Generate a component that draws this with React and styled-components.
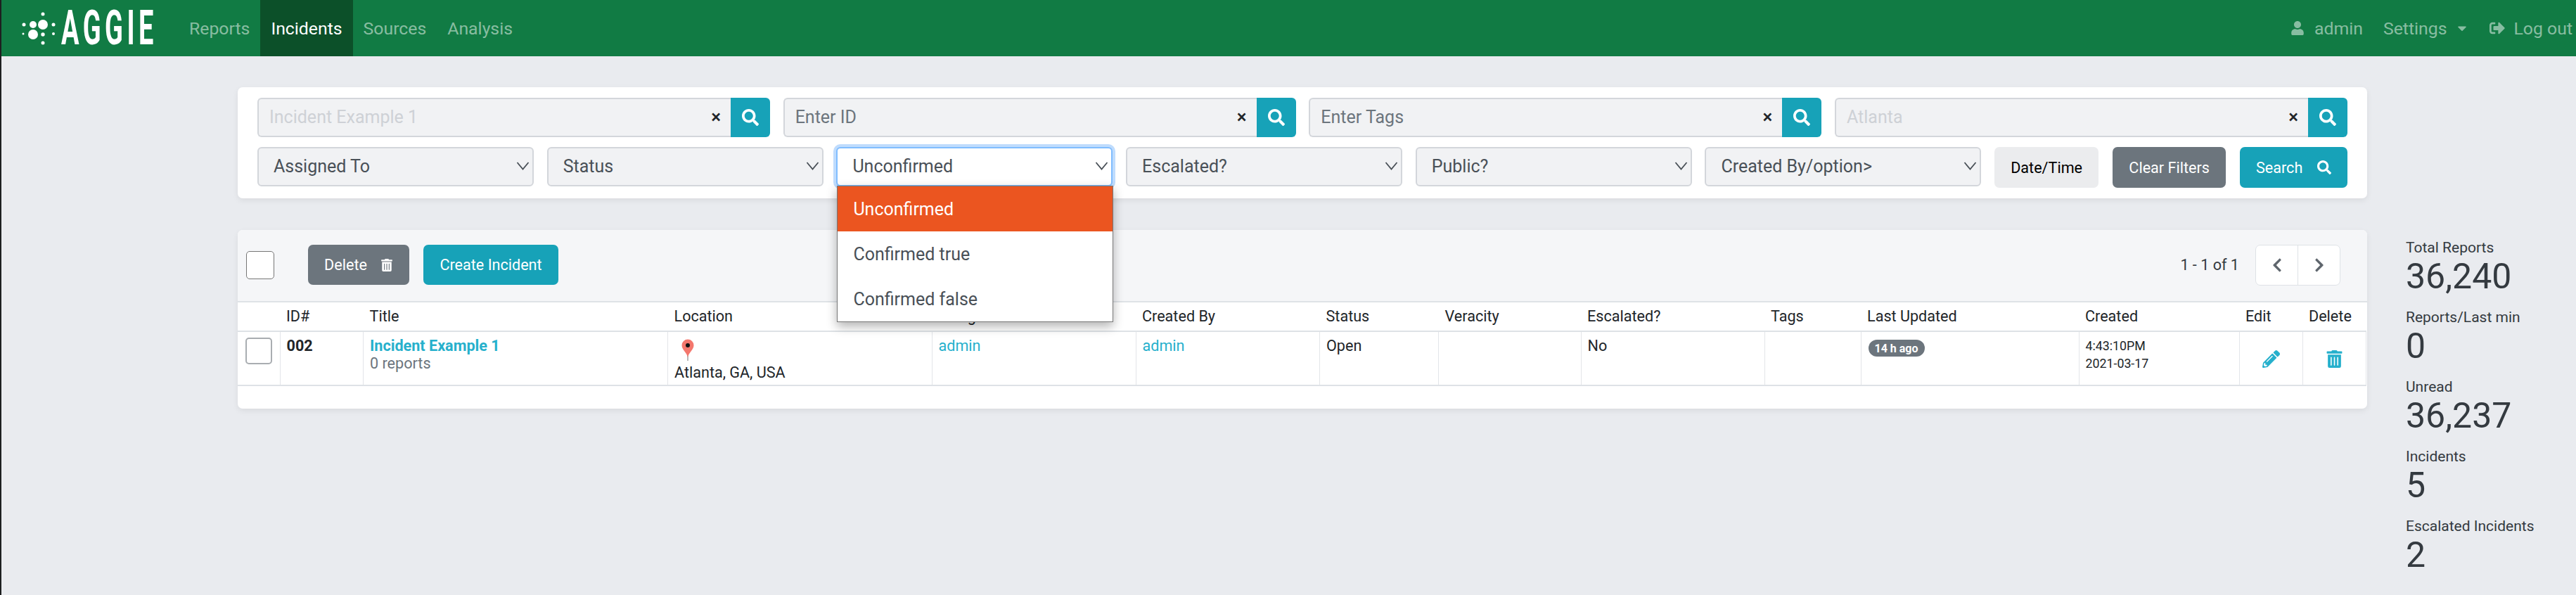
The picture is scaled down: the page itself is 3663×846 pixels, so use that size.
import React from 'react';
import styled, { createGlobalStyle } from 'styled-components';
import { FaSearch, FaTrashAlt, FaPencilAlt, FaUser, FaSignOutAlt, FaCaretDown, FaChevronLeft, FaChevronRight } from 'react-icons/fa';

const GlobalStyle = createGlobalStyle`
    html, body {
        margin: 0;
        height: 100%;
        background: #e9ebef;
    }
    body {
        font-family: Roboto, "Liberation Sans", sans-serif;
        color: #212529;
    }
    * {
        box-sizing: border-box;
    }
`

const Page = styled.div`
    min-height: 100vh;
    border-left: 2px solid #1d1f20;
    overflow: hidden;
`

const Nav = styled.nav`
    height: 80px;
    background: #117b44;
    display: flex;
    align-items: stretch;
    font-size: 24.8px;
`
const Logo = styled.svg`
    width: 232px;
    height: 80px;
    margin-right: 20px;
    flex: none;
`
const NavLink = styled.a`
    display: flex;
    align-items: center;
    padding: 0 15px;
    color: ${props => props.active ? '#fff' : 'rgba(255,255,255,0.5)'};
    background: ${props => props.active ? '#0c5029' : 'transparent'};
`
const NavRight = styled.div`
    margin-left: auto;
    display: flex;
    align-items: center;
    gap: 29px;
    padding-right: 5px;
    color: rgba(255,255,255,0.5);
`
const NavItem = styled.span`
    display: flex;
    align-items: center;
    gap: ${props => props.gap || 14}px;
`

const Main = styled.div`
    display: flex;
    padding: 44px 0 0 336px;
    gap: 55px;
`
const Content = styled.div`
    width: 3028px;
    flex: none;
    display: flex;
    flex-direction: column;
    gap: 45px;
`
const Card = styled.section`
    background: #fff;
    border-radius: 7px;
    box-shadow: 0 3px 8px rgba(0,0,0,0.07);
`

const Filters = styled(Card)`
    height: 158px;
    padding: 15px 28px 0;
    display: flex;
    flex-direction: column;
    gap: 14px;
`
const SearchRow = styled.div`
    display: grid;
    grid-template-columns: repeat(4, 1fr);
    gap: 18.67px;
`
const SearchGroup = styled.div`
    display: flex;
    height: 56px;
`
const SearchInput = styled.div`
    flex: 1;
    display: flex;
    align-items: center;
    justify-content: space-between;
    padding: 0 14px 2px 15px;
    background: #f1f2f4;
    border: 2px solid #d3d6db;
    border-right: 0;
    border-radius: 6px 0 0 6px;
    color: ${props => props.light ? '#ced1d6' : '#6c757d'};
    font-size: 25px;
`
const Clear = styled.span`
    color: #212529;
    font-size: 26px;
    font-weight: 500;
`
const SearchButton = styled.button`
    width: 56px;
    border: 0;
    padding: 0;
    background: #17a2b8;
    border-radius: 0 6px 6px 0;
    color: #fff;
    font-size: 24px;
    display: flex;
    align-items: center;
    justify-content: center;
`
const ControlRow = styled.div`
    display: flex;
    align-items: flex-start;
`
const SelectBox = styled.div`
    position: relative;
    width: 393px;
    height: 56px;
    margin-right: 18.7px;
    flex: none;
    display: flex;
    align-items: center;
    justify-content: space-between;
    padding: 0 1px 2px 21px;
    font-size: 25px;
    color: #495057;
    border-radius: 6px;
    background: ${props => props.open ? '#fff' : '#f1f2f4'};
    border: 2px solid ${props => props.open ? '#80bdff' : '#d3d6db'};
    box-shadow: ${props => props.open ? '0 0 0 4px #bfdcfd' : 'none'};
`
const Menu = styled.ul`
    position: absolute;
    z-index: 5;
    left: -1px;
    top: 53px;
    width: 393px;
    margin: 0;
    padding: 0;
    list-style: none;
    background: #fff;
    border: 1px solid #777;
    box-shadow: 0 6px 14px rgba(0,0,0,0.3);
`
const Option = styled.li`
    height: 64px;
    display: flex;
    align-items: center;
    padding-left: 22px;
    background: ${props => props.active ? '#eb5520' : '#fff'};
    color: ${props => props.active ? '#fff' : '#495057'};
`
const Button = styled.button`
    height: ${props => props.tall ? 58 : 57}px;
    border: 0;
    border-radius: 7px;
    font-family: inherit;
    font-size: 21.6px;
    display: flex;
    align-items: center;
    justify-content: center;
    gap: ${props => props.gap || 0}px;
    color: ${props => props.kind === 'light' ? '#000' : '#fff'};
    background: ${props => ({ info: '#17a2b8', grey: '#6c757d', light: '#ebecee' }[props.kind])};
    width: ${props => props.w}px;
    margin-left: ${props => props.ml || 0}px;
    flex: none;
`

const ListCard = styled(Card)`
    height: 254px;
    overflow: hidden;
`
const Toolbar = styled.div`
    height: 103px;
    background: #f5f6f8;
    border-bottom: 2px solid #dee2e6;
    display: flex;
    align-items: center;
    padding: 0 38px 2px 12px;
`
const CheckBox = styled.span`
    display: block;
    width: ${props => props.size}px;
    height: ${props => props.size}px;
    background: #fff;
    border: ${props => props.soft ? '2px solid #a9adb1' : '1px solid #767676'};
    border-radius: 5px;
    flex: none;
`
const Pager = styled.div`
    margin-left: auto;
    display: flex;
    align-items: center;
    gap: 23px;
    font-size: 21.6px;
    color: #343a40;
`
const PagerGroup = styled.div`
    display: flex;
    width: 121px;
    height: 58px;
    background: #fff;
    border: 1px solid #dee2e6;
    border-radius: 7px;
`
const PagerButton = styled.span`
    flex: 1;
    display: flex;
    align-items: center;
    justify-content: center;
    color: #5f666d;
    font-size: 22px;
    & + & {
        border-left: 1px solid #dee2e6;
    }
`

const Table = styled.table`
    width: 3026px;
    table-layout: fixed;
    border-collapse: collapse;
    font-size: 21.6px;
`
const Th = styled.th`
    height: 41px;
    padding: 0 9px 2px;
    font-weight: 400;
    text-align: left;
    white-space: nowrap;
    border-bottom: 2px solid #dee2e6;
`
const Td = styled.td`
    height: 77px;
    padding: 7px 9px 0;
    vertical-align: top;
    line-height: 25px;
    border-left: 1px solid #e3e5e9;
    border-right: 1px solid #e3e5e9;
    border-bottom: 2px solid #dee2e6;
    &:first-child {
        border-left: 0;
        padding: 8px 0 0 11px;
    }
`
const IconCell = styled(Td)`
    text-align: center;
    color: #26b0cc;
    font-size: 25px;
    padding-top: 26px;
`
const Id = styled.b`
    font-weight: 700;
`
const Link = styled.a`
    color: #26b0cc;
    font-weight: ${props => props.bold ? 700 : 400};
`
const Muted = styled.div`
    color: #6c757d;
`
const Pin = styled.svg`
    display: block;
    width: 20px;
    height: 32px;
    margin: 3px 0 3px 9px;
`
const Badge = styled.span`
    display: inline-flex;
    align-items: center;
    height: 24px;
    padding: 0 9px;
    margin: 4px 0 0 1px;
    border-radius: 12px;
    background: #6c757d;
    color: #fff;
    font-size: 16px;
    font-weight: 700;
`
const DateTime = styled.div`
    font-size: 17.8px;
`

const Stats = styled.aside`
    padding-top: 215px;
    display: flex;
    flex-direction: column;
    gap: 17px;
    color: #343a40;
`
const Stat = styled.div`
    display: flex;
    flex-direction: column;
`
const StatLabel = styled.span`
    font-size: 21px;
    line-height: 26px;
`
const StatValue = styled.span`
    font-size: 50px;
    line-height: 56px;
`

function Chevron() {
    return (
        <svg width="24" height="14" viewBox="0 0 24 14">
            <path d="M3.5 2 L11.5 11.5 L19.5 2" fill="none" stroke="#495057" strokeWidth="1.8" />
        </svg>
    )
}

const searches = [
    { text: 'Incident Example 1', light: true },
    { text: 'Enter ID' },
    { text: 'Enter Tags' },
    { text: 'Atlanta', light: true },
]
const selects = ['Assigned To', 'Status', 'Unconfirmed', 'Escalated?', 'Public?', 'Created By/option>']
const columns = [
    ['', 60], ['ID#', 118.5], ['Title', 433], ['Location', 375.5], ['Assigned To', 290], ['Created By', 261.5], ['Status', 169],
    ['Veracity', 202.5], ['Escalated?', 261], ['Tags', 137], ['Last Updated', 310], ['Created', 228], ['Edit', 90], ['Delete', 90],
]
const stats = [
    ['Total Reports', '36,240'],
    ['Reports/Last min', '0'],
    ['Unread', '36,237'],
    ['Incidents', '5'],
    ['Escalated Incidents', '2'],
]

function App() {
    return (
        <Page>
            <GlobalStyle />
            <Nav>
                <Logo viewBox="0 0 232 80">
                    <g fill="#fff">
                        <circle cx="59" cy="20" r="2.5" />
                        <circle cx="32" cy="35" r="2.5" />
                        <circle cx="45" cy="35" r="5" />
                        <circle cx="59" cy="35" r="7" />
                        <circle cx="74" cy="35" r="2.5" />
                        <circle cx="31" cy="48" r="1.5" />
                        <circle cx="45" cy="49" r="7" />
                        <circle cx="59" cy="49" r="2.7" />
                        <circle cx="74" cy="48" r="2" />
                        <circle cx="59" cy="61" r="2.5" />
                        <text transform="translate(85 63) scale(0.55 1)" letterSpacing="10" fontFamily="Roboto, sans-serif" fontWeight="700" fontSize="69">AGGIE</text>
                    </g>
                </Logo>
                <NavLink>Reports</NavLink>
                <NavLink active>Incidents</NavLink>
                <NavLink>Sources</NavLink>
                <NavLink>Analysis</NavLink>
                <NavRight>
                    <NavItem><FaUser size={20} />admin</NavItem>
                    <NavItem gap={11}>Settings<FaCaretDown size={20} /></NavItem>
                    <NavItem gap={13}><FaSignOutAlt size={22} />Log out</NavItem>
                </NavRight>
            </Nav>
            <Main>
                <Content>
                    <Filters>
                        <SearchRow>
                            {searches.map(s => (
                                <SearchGroup key={s.text}>
                                    <SearchInput light={s.light}>{s.text}<Clear>×</Clear></SearchInput>
                                    <SearchButton><FaSearch /></SearchButton>
                                </SearchGroup>
                            ))}
                        </SearchRow>
                        <ControlRow>
                            {selects.map(s => (
                                <SelectBox key={s} open={s === 'Unconfirmed'}>
                                    {s}<Chevron />
                                    {s === 'Unconfirmed' && (
                                        <Menu>
                                            <Option active>Unconfirmed</Option>
                                            <Option>Confirmed true</Option>
                                            <Option>Confirmed false</Option>
                                        </Menu>
                                    )}
                                </SelectBox>
                            ))}
                            <Button kind="light" w={148} tall>Date/Time</Button>
                            <Button kind="grey" w={161} ml={20} tall>Clear Filters</Button>
                            <Button kind="info" w={153} ml={20} gap={21} tall>Search<FaSearch size={20} /></Button>
                        </ControlRow>
                    </Filters>
                    <ListCard>
                        <Toolbar>
                            <CheckBox size={40} />
                            <Button kind="grey" w={144} ml={48} gap={19}>Delete<FaTrashAlt size={18} /></Button>
                            <Button kind="info" w={192} ml={20}>Create Incident</Button>
                            <Pager>
                                1 - 1 of 1
                                <PagerGroup>
                                    <PagerButton><FaChevronLeft /></PagerButton>
                                    <PagerButton><FaChevronRight /></PagerButton>
                                </PagerGroup>
                            </Pager>
                        </Toolbar>
                        <Table>
                            <colgroup>
                                {columns.map(([name, width]) => <col key={name} width={width} />)}
                            </colgroup>
                            <thead>
                                <tr>{columns.map(([name]) => <Th key={name}>{name}</Th>)}</tr>
                            </thead>
                            <tbody>
                                <tr>
                                    <Td><CheckBox size={38} soft /></Td>
                                    <Td><Id>002</Id></Td>
                                    <Td>
                                        <Link bold>Incident Example 1</Link>
                                        <Muted>0 reports</Muted>
                                    </Td>
                                    <Td>
                                        <Pin viewBox="0 0 20 32">
                                            <path d="M9.2 20 L9.2 31 L10.8 31 L10.8 20 Z" fill="#a8a8a8" />
                                            <path d="M10 26 C8.5 19 1.5 15 1.5 9 A8.5 8.5 0 0 1 18.5 9 C18.5 15 11.5 19 10 26 Z" fill="#f4776d" />
                                            <circle cx="10" cy="9" r="3" fill="#111" />
                                        </Pin>
                                        Atlanta, GA, USA
                                    </Td>
                                    <Td><Link>admin</Link></Td>
                                    <Td><Link>admin</Link></Td>
                                    <Td>Open</Td>
                                    <Td />
                                    <Td>No</Td>
                                    <Td />
                                    <Td><Badge>14 h ago</Badge></Td>
                                    <Td>
                                        <DateTime>4:43:10PM</DateTime>
                                        <DateTime>2021-03-17</DateTime>
                                    </Td>
                                    <IconCell><FaPencilAlt /></IconCell>
                                    <IconCell><FaTrashAlt /></IconCell>
                                </tr>
                            </tbody>
                        </Table>
                    </ListCard>
                </Content>
                <Stats>
                    {stats.map(([label, value]) => (
                        <Stat key={label}>
                            <StatLabel>{label}</StatLabel>
                            <StatValue>{value}</StatValue>
                        </Stat>
                    ))}
                </Stats>
            </Main>
        </Page>
    )
}

export default App
